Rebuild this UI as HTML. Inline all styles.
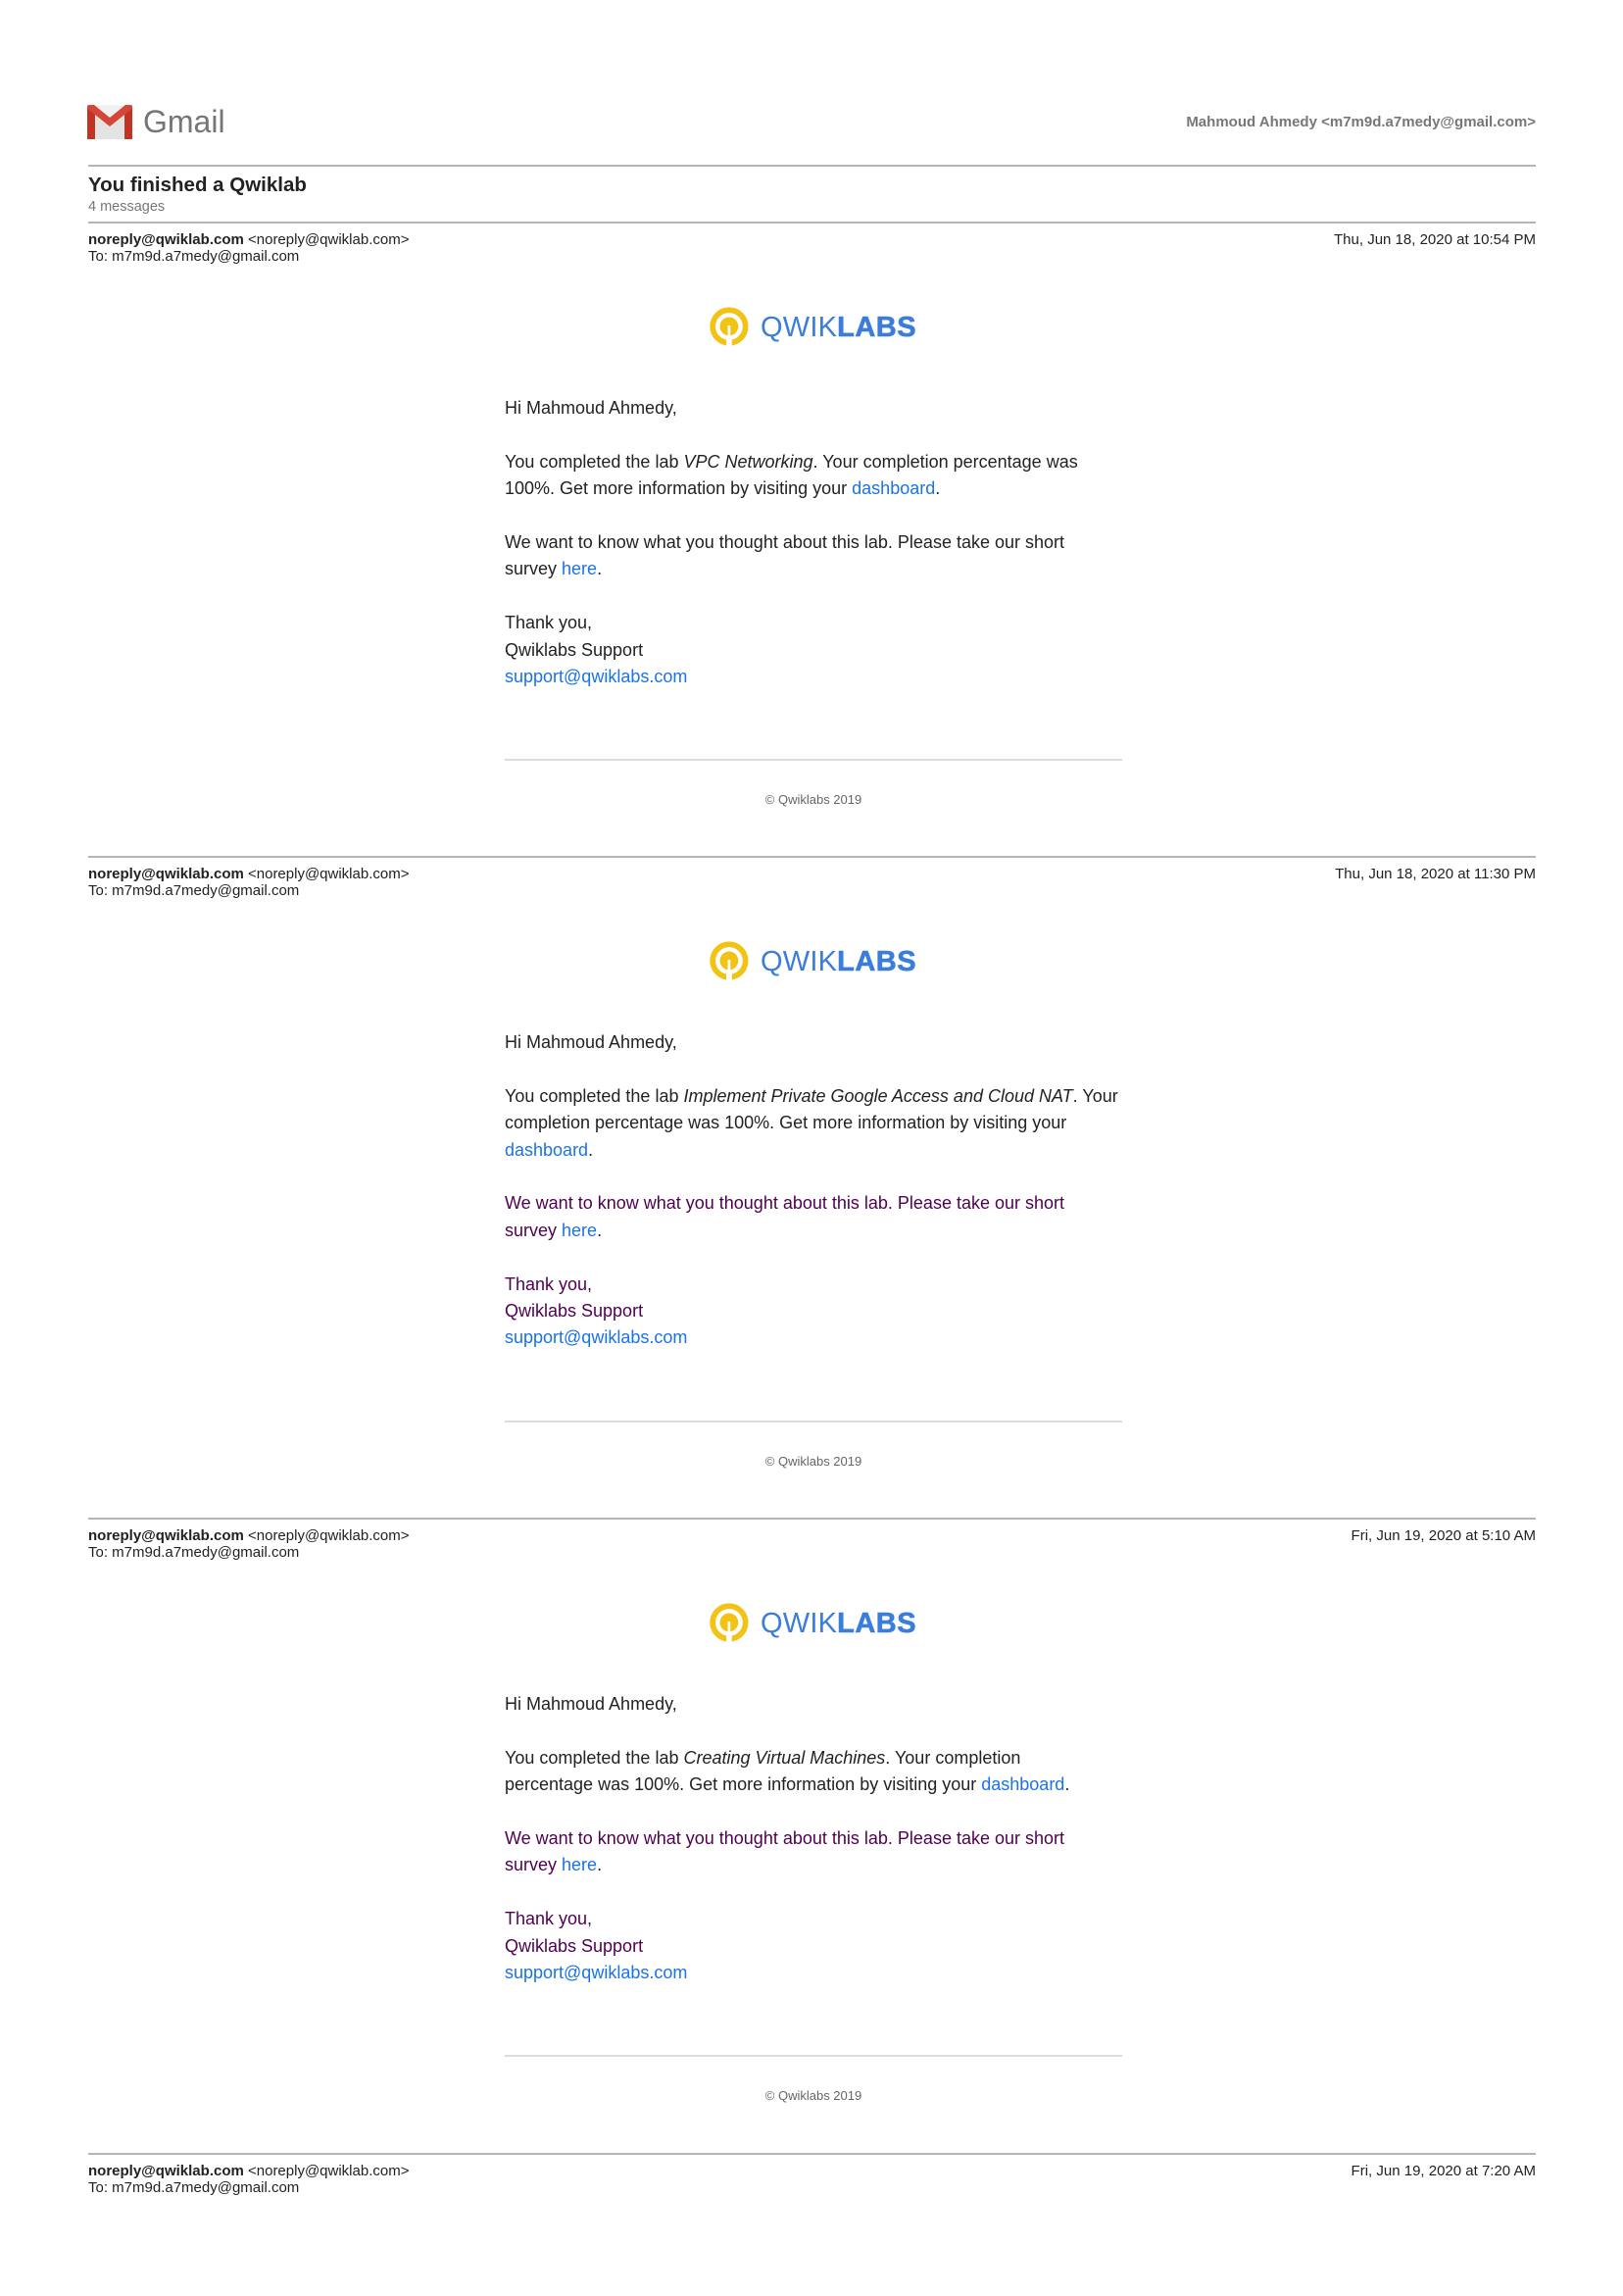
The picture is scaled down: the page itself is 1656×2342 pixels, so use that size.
<!DOCTYPE html>
<html><head><meta charset="utf-8">
<style>
html,body{margin:0;padding:0;background:#fff;}
body{width:1656px;height:2342px;position:relative;overflow:hidden;font-family:"Liberation Sans",Arial,sans-serif;color:#222;}
.abs{position:absolute;}
.line{position:absolute;left:90px;width:1477px;height:0;border-top:2px solid #b5b5b5;}
.msg{position:absolute;left:0;width:1656px;}
.hdr{position:absolute;left:90px;top:10px;font-size:15px;line-height:17px;color:#222;white-space:nowrap;}
.date{position:absolute;right:89px;top:10px;font-size:15px;line-height:17px;color:#222;white-space:nowrap;}
.logo{position:absolute;left:723px;top:85px;height:46px;white-space:nowrap;}
.logo svg{position:absolute;left:0;top:0;}
.logo .t{position:absolute;left:53px;top:5px;font-size:29px;line-height:36px;color:#3b7ddd;letter-spacing:0.2px;}
.logo .t b{font-weight:bold;letter-spacing:0.5px;-webkit-text-stroke:0.6px #3b7ddd;}
.body{position:absolute;left:515px;top:177px;width:640px;font-size:18px;line-height:27.4px;white-space:nowrap;}
.body p{margin:0 0 27.4px 0;}
.body a{color:#1a73e8;text-decoration:none;}
.purple{color:#500050;}
.hr2{height:0;border-top:2px solid #dadce0;width:630px;margin-top:70px;}
.copy{width:630px;text-align:center;font-size:13px;color:#666;margin-top:32px;line-height:16px;}
</style></head><body>

<svg class="abs" style="left:88px;top:106px" width="48" height="37" viewBox="0 0 48 37">
  <rect x="1" y="1" width="46" height="35" rx="2" fill="#f1f1f1"/>
  <path d="M1 36 L1 4 L24 21 L47 4 L47 36" fill="#e3e3e3"/>
  <path d="M1 3 Q1 1 3 1 L8 1 L24 14 L40 1 L45 1 Q47 1 47 3 L47 36 L39 36 L39 11 L24 23 L9 11 L9 36 L1 36 Z" fill="#d44638"/>
  <path d="M39 11 L47 5 L47 36 L39 36 Z" fill="#c23321"/>
  <path d="M1 5 L9 11 L9 36 L1 36 Z" fill="#c23321"/>
</svg>
<div class="abs" style="left:146px;top:104px;font-size:32px;line-height:40px;color:#757575;">Gmail</div>
<div class="abs" style="right:89px;top:116px;font-size:15px;line-height:17px;font-weight:bold;color:#777;">Mahmoud Ahmedy &lt;m7m9d.a7medy@gmail.com&gt;</div>
<div class="line" style="top:168px"></div>
<div class="abs" style="left:90px;top:177px;font-size:20.5px;line-height:24px;font-weight:bold;color:#222;">You finished a Qwiklab</div>
<div class="abs" style="left:90px;top:203px;font-size:14.5px;line-height:16px;color:#777;">4 messages</div>

<div class="msg" style="top:226px">
  <div class="line" style="top:0"></div>
  <div class="hdr"><b>noreply@qwiklab.com</b> &lt;noreply@qwiklab.com&gt;<br>To: m7m9d.a7medy@gmail.com</div>
  <div class="date">Thu, Jun 18, 2020 at 10:54 PM</div>
  <div class="logo">
    <svg width="46" height="46" viewBox="0 0 44 44"><circle cx="20" cy="21" r="16" fill="none" stroke="#f2c314" stroke-width="5.5"/><rect x="17.3" y="29" width="5.4" height="13" fill="#fff"/><circle cx="20" cy="21" r="9" fill="#f2c314"/><rect x="18.7" y="20" width="2.6" height="13" fill="#fff"/></svg>
    <div class="t">QWIK<b>LABS</b></div>
  </div>
  <div class="body">
    <p>Hi Mahmoud Ahmedy,</p>
    <p>You completed the lab <i>VPC Networking</i>. Your completion percentage was<br>100%. Get more information by visiting your <a>dashboard</a>.</p>
    <p>We want to know what you thought about this lab. Please take our short<br>survey <a>here</a>.</p>
    <p style="margin:0">Thank you,<br>Qwiklabs Support<br><a>support@qwiklabs.com</a></p>
    <div class="hr2"></div>
    <div class="copy">© Qwiklabs 2019</div>
  </div>
</div>

<div class="msg" style="top:873px">
  <div class="line" style="top:0"></div>
  <div class="hdr"><b>noreply@qwiklab.com</b> &lt;noreply@qwiklab.com&gt;<br>To: m7m9d.a7medy@gmail.com</div>
  <div class="date">Thu, Jun 18, 2020 at 11:30 PM</div>
  <div class="logo">
    <svg width="46" height="46" viewBox="0 0 44 44"><circle cx="20" cy="21" r="16" fill="none" stroke="#f2c314" stroke-width="5.5"/><rect x="17.3" y="29" width="5.4" height="13" fill="#fff"/><circle cx="20" cy="21" r="9" fill="#f2c314"/><rect x="18.7" y="20" width="2.6" height="13" fill="#fff"/></svg>
    <div class="t">QWIK<b>LABS</b></div>
  </div>
  <div class="body">
    <p>Hi Mahmoud Ahmedy,</p>
    <p>You completed the lab <i>Implement Private Google Access and Cloud NAT</i>. Your<br>completion percentage was 100%. Get more information by visiting your<br><a>dashboard</a>.</p>
    <p class="purple">We want to know what you thought about this lab. Please take our short<br>survey <a>here</a>.</p>
    <p class="purple" style="margin:0">Thank you,<br>Qwiklabs Support<br><a>support@qwiklabs.com</a></p>
    <div class="hr2"></div>
    <div class="copy">© Qwiklabs 2019</div>
  </div>
</div>

<div class="msg" style="top:1548px">
  <div class="line" style="top:0"></div>
  <div class="hdr"><b>noreply@qwiklab.com</b> &lt;noreply@qwiklab.com&gt;<br>To: m7m9d.a7medy@gmail.com</div>
  <div class="date">Fri, Jun 19, 2020 at 5:10 AM</div>
  <div class="logo">
    <svg width="46" height="46" viewBox="0 0 44 44"><circle cx="20" cy="21" r="16" fill="none" stroke="#f2c314" stroke-width="5.5"/><rect x="17.3" y="29" width="5.4" height="13" fill="#fff"/><circle cx="20" cy="21" r="9" fill="#f2c314"/><rect x="18.7" y="20" width="2.6" height="13" fill="#fff"/></svg>
    <div class="t">QWIK<b>LABS</b></div>
  </div>
  <div class="body">
    <p>Hi Mahmoud Ahmedy,</p>
    <p>You completed the lab <i>Creating Virtual Machines</i>. Your completion<br>percentage was 100%. Get more information by visiting your <a>dashboard</a>.</p>
    <p class="purple">We want to know what you thought about this lab. Please take our short<br>survey <a>here</a>.</p>
    <p class="purple" style="margin:0">Thank you,<br>Qwiklabs Support<br><a>support@qwiklabs.com</a></p>
    <div class="hr2"></div>
    <div class="copy">© Qwiklabs 2019</div>
  </div>
</div>

<div class="msg" style="top:2196px">
  <div class="line" style="top:0"></div>
  <div class="hdr"><b>noreply@qwiklab.com</b> &lt;noreply@qwiklab.com&gt;<br>To: m7m9d.a7medy@gmail.com</div>
  <div class="date">Fri, Jun 19, 2020 at 7:20 AM</div>
</div>

</body></html>
